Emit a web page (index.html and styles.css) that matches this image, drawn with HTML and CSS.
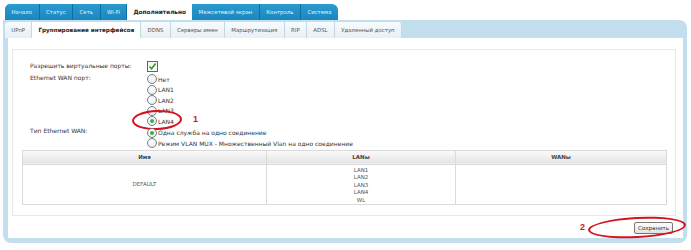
FILE: index.html
```html
<!DOCTYPE html>
<html lang="ru">
<head>
<meta charset="utf-8">
<link rel="stylesheet" href="styles.css">
</head>
<body>
<div class="page">
  <nav class="topnav">
    <div class="ttab first">Начало</div>
    <div class="ttab">Статус</div>
    <div class="ttab">Сеть</div>
    <div class="ttab">Wi-Fi</div>
    <div class="ttab active">Дополнительно</div>
    <div class="ttab">Межсетевой экран</div>
    <div class="ttab">Контроль</div>
    <div class="ttab last">Система</div>
  </nav>
  <div class="panel">
    <nav class="subnav">
      <div class="stab">UPnP</div>
      <div class="stab active">Группирование интерфейсов</div>
      <div class="stab">DDNS</div>
      <div class="stab">Серверы имен</div>
      <div class="stab">Маршрутизация</div>
      <div class="stab">RIP</div>
      <div class="stab">ADSL</div>
      <div class="stab">Удаленный доступ</div>
    </nav>
    <div class="content">
      <div class="fieldset">
        <div class="row">
          <div class="label">Разрешить виртуальные порты:</div>
          <div class="value">
            <span class="checkbox">
              <svg width="9" height="9" viewBox="0 0 9 9"><path d="M1.5 4.5 L3.6 6.8 L7.6 1.6" fill="none" stroke="#2e9a2e" stroke-width="1.6"/></svg>
            </span>
          </div>
        </div>
        <div class="row">
          <div class="label lbl-wan">Ethernet WAN порт:</div>
          <div class="value radios">
            <div class="opt"><span class="radio"></span>Нет</div>
            <div class="opt"><span class="radio"></span>LAN1</div>
            <div class="opt"><span class="radio"></span>LAN2</div>
            <div class="opt"><span class="radio"></span>LAN3</div>
            <div class="opt mark"><span class="radio on"></span>LAN4
              <span class="ring ring1"></span><span class="num num1">1</span>
            </div>
          </div>
        </div>
        <div class="row row-type">
          <div class="label lbl-type">Тип Ethernet WAN:</div>
          <div class="value radios">
            <div class="opt"><span class="radio on"></span>Одна служба на одно соединение</div>
            <div class="opt"><span class="radio"></span>Режим VLAN MUX - Множественный Vlan на одно соединение</div>
          </div>
        </div>
        <table class="grid">
          <thead>
            <tr><th class="c1">Имя</th><th class="c2">LANы</th><th class="c3">WANы</th></tr>
          </thead>
          <tbody>
            <tr>
              <td>DEFAULT</td>
              <td class="lans">LAN1<br>LAN2<br>LAN3<br>LAN4<br>WL</td>
              <td></td>
            </tr>
          </tbody>
        </table>
      </div>
      <div class="actions">
        <span class="savewrap">
          <span class="num num2">2</span>
          <span class="ring ring2"></span>
          <button class="btn">Сохранить</button>
        </span>
      </div>
    </div>
  </div>
</div>
</body>
</html>
```
FILE: styles.css
```css
html, body {
  margin: 0;
  padding: 0;
  background: #fff;
}
body {
  font-family: "DejaVu Sans", Verdana, sans-serif;
  font-size: 6px;
  color: #333;
}
.page {
  width: 691px;
  height: 250px;
  overflow: hidden;
  padding-top: 4px;
  box-sizing: border-box;
}
.topnav {
  display: flex;
  margin-left: 5px;
  height: 16px;
}
.ttab {
  background: linear-gradient(#2b9bd0, #1a86bd);
  color: #e8f4fb;
  line-height: 16px;
  font-size: 5.4px;
  padding: 0 6.5px;
  border-right: 1px solid #0f6f9f;
  white-space: nowrap;
}
.ttab.first { border-top-left-radius: 5px; }
.ttab.last { border-top-right-radius: 6px; border-right: none; }
.ttab.active {
  background: #fff;
  color: #222;
  font-weight: bold;
  font-size: 5.8px;
  padding: 0 6px;
  border-right: none;
}
.panel {
  margin: 0 4px 0 3px;
  height: 223px;
  background: #c3dfee;
  border-radius: 0 8px 8px 8px;
  padding: 2px 4px 5px 5px;
  box-sizing: border-box;
  display: flex;
  flex-direction: column;
}
.subnav {
  display: flex;
  height: 16px;
  margin-left: -3px;
}
.stab {
  background: linear-gradient(#f7fbfd, #e6f0f6);
  color: #555;
  line-height: 16px;
  font-size: 5.4px;
  padding: 0 6.3px;
  border-right: 1px solid #c3d6e2;
  white-space: nowrap;
}
.stab:first-child { border-top-left-radius: 3px; }
.stab:last-child { border-top-right-radius: 3px; }
.stab.active {
  background: #fff;
  color: #222;
  font-weight: bold;
  font-size: 5.7px;
  padding: 0 6px;
}
.content {
  flex: 1;
  background: #fff;
  padding: 11px 7px 0 4px;
}
.fieldset {
  border: 1px solid #e8e8e8;
  padding: 10px 8px 10px 9px;
}
.row {
  display: flex;
  padding-left: 8px;
}
.label {
  width: 117px;
  flex: none;
  line-height: 12px;
}
.value { flex: 1; }
.checkbox {
  display: inline-flex;
  align-items: center;
  justify-content: center;
  width: 9px;
  height: 9px;
  border: 1px solid #4d6a86;
  background: linear-gradient(#f4f4f4, #fff);
  margin-top: 1px;
}
.lbl-wan { padding-top: 2px; line-height: 8px; }
.radios { padding-top: 2px; }
.opt {
  display: flex;
  align-items: center;
  height: 10.5px;
  position: relative;
  white-space: nowrap;
}
.radio {
  width: 8px;
  height: 8px;
  border: 1px solid #6f7f8f;
  border-radius: 50%;
  background: radial-gradient(circle at 40% 35%, #fff, #e6e6e6);
  margin-right: 1px;
  position: relative;
  flex: none;
}
.radio.on::after {
  content: "";
  position: absolute;
  left: 2px;
  top: 2px;
  width: 4px;
  height: 4px;
  border-radius: 50%;
  background: #3cb043;
}
.row-type { margin-top: 0; }
.lbl-type { line-height: 8px; padding-top: 0; }
.row-type .radios { padding-top: 0; margin-top: 1px; }
.ring {
  position: absolute;
  border: 2px solid #d4141c;
  border-radius: 50%;
}
.ring1 {
  left: -15px;
  top: -6px;
  width: 46px;
  height: 16px;
  transform: rotate(-2deg);
}
.num {
  position: absolute;
  color: #d4141c;
  font-family: "Liberation Sans", Arial, sans-serif;
  font-size: 9px;
  font-weight: bold;
}
.num1 { left: 46px; top: -2px; }
.grid {
  width: 100%;
  border-collapse: collapse;
  margin-top: 1px;
  font-size: 5.5px;
  color: #555;
  border: 1px solid #dadada;
}
.grid th {
  background: linear-gradient(#fbfbfb, #e4e4e4);
  height: 13px;
  padding: 0;
  font-weight: bold;
  color: #444;
  border: 1px solid #dadada;
}
.grid .c1 { width: 243px; }
.grid .c2 { width: 188px; }
.grid td {
  border: 1px solid #dadada;
  text-align: center;
  height: 36px;
  padding: 0;
  vertical-align: middle;
}
.grid td.lans {
  line-height: 7.6px;
  vertical-align: top;
  padding-top: 2px;
}
.actions {
  display: flex;
  justify-content: flex-end;
  padding: 6px 3px 0 0;
}
.savewrap {
  position: relative;
  display: inline-block;
}
.btn {
  font-family: "DejaVu Sans", Verdana, sans-serif;
  font-size: 5.5px;
  color: #333;
  height: 12px;
  padding: 0 3px;
  border: 1px solid #777;
  border-radius: 2px;
  background: linear-gradient(#fdfdfd, #e2e2e2);
  display: block;
}
.ring2 {
  left: -46px;
  top: -5px;
  width: 94px;
  height: 17px;
  transform: rotate(-3deg);
}
.num2 { left: -54px; top: 0; }
```
